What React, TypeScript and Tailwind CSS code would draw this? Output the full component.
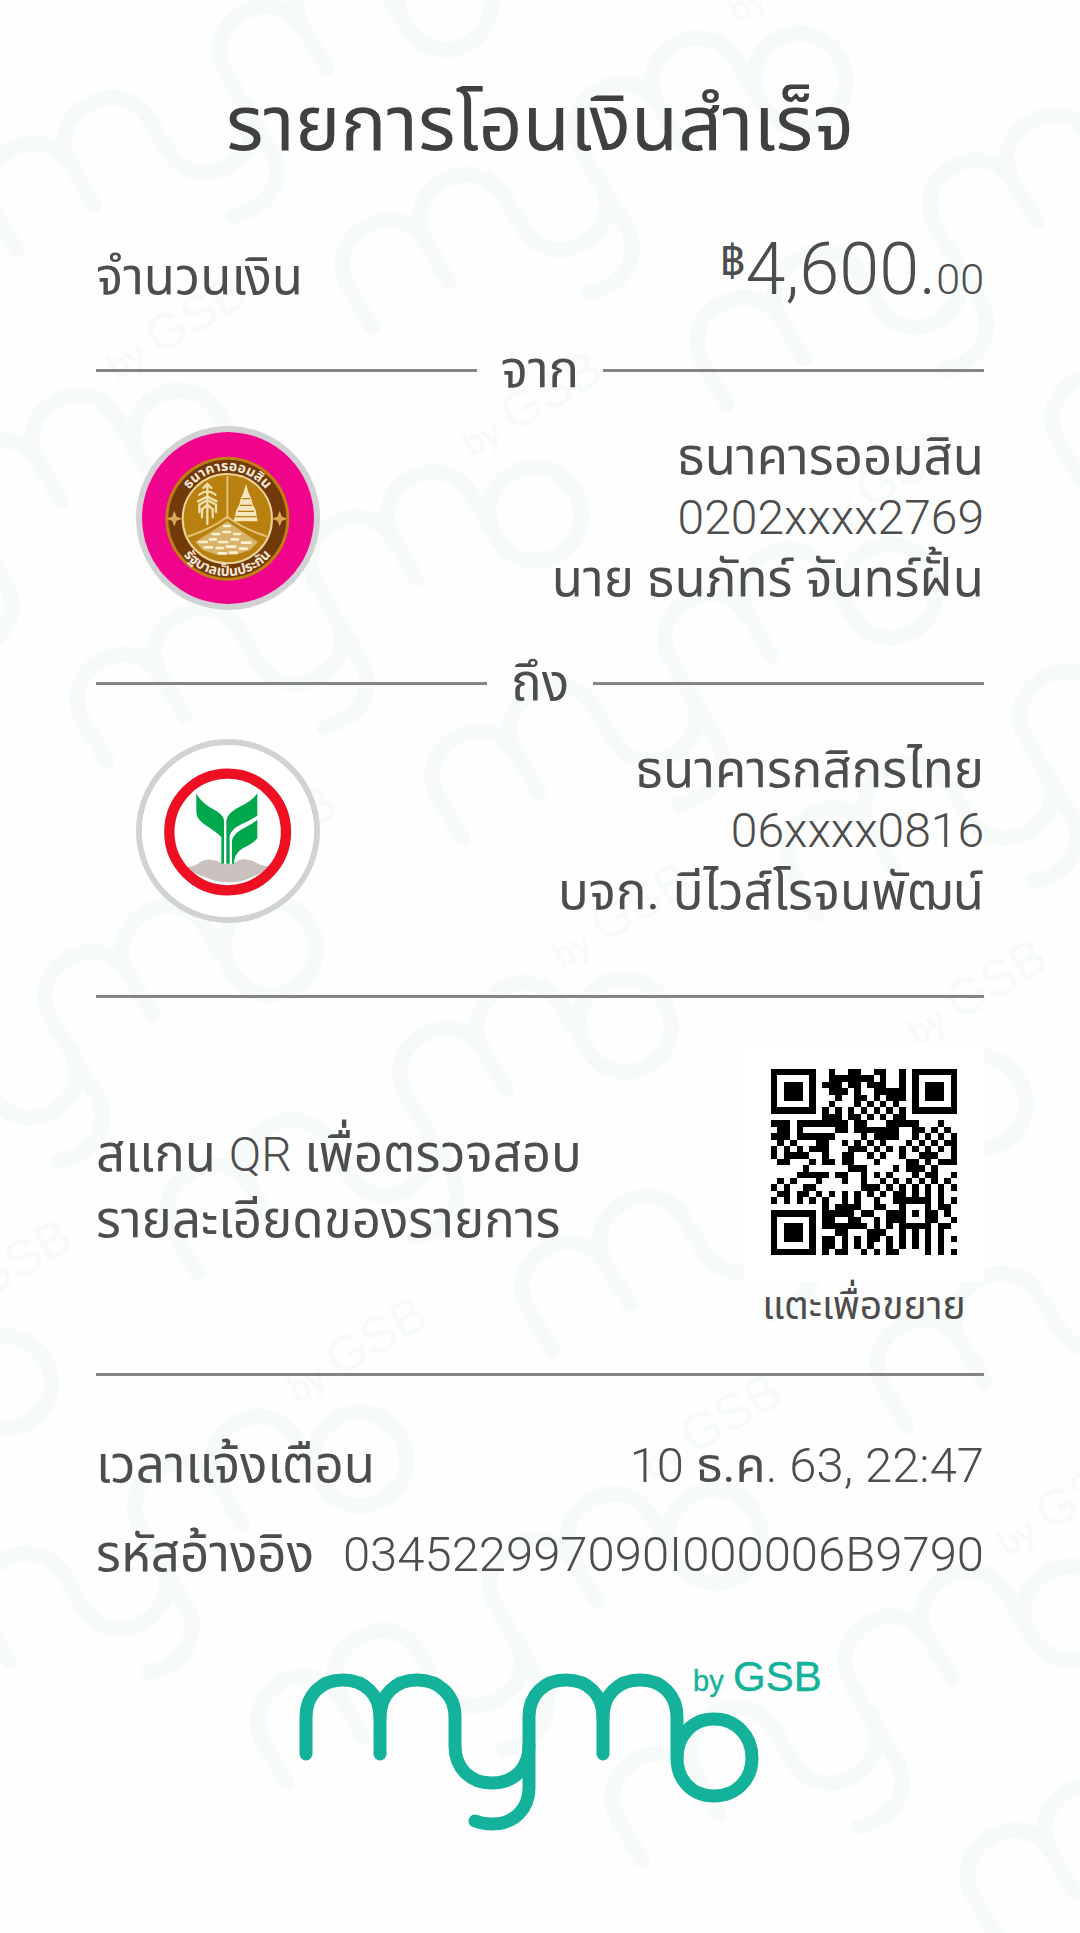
import type { ReactNode } from "react";

const QR_ROWS = [
  "#######..#..##..##..#.#######",
  "#.....#..#######.#..#.#.....#",
  "#.###.#.###.##.###..#.#.###.#",
  "#.###.#..###.#..#####.#.###.#",
  "#.###.#...#..##.#.###.#.###.#",
  "#.....#..#...#.#.#.#..#.....#",
  "#######.#.#.#.#.#.#.#.#######",
  "........###.##.#.#.##........",
  "###.########.##...#####...#..",
  ".##.#.....##.#######..##.#.#.",
  "###.######....#.####..#.#.#.#",
  ".#.#...##..#.#.#.#...#.#.#.##",
  "#.#.#.###...###.#.#.#.#.#.#.#",
  "#.####..#..##..#.#..#..###..#",
  ".##...#.##.##...#....##.#.###",
  ".....#......###....#.###.#...",
  "....#####.##..#.#.#...#.##..#",
  ".#.#...#...#..#..#.#.#.#.#.#.",
  "#.#..##.......###.#.#.#.#.#.#",
  ".##.##.#.#.#.#.#.#.##.#.#.#..",
  "#.#.#.#.#..#.#..#..######.#.#",
  "........#.####..##..#...#.##.",
  "#######.#####.##..###.#.##.#.",
  "#.....#.##..##..#.###...##..#",
  "#.###.#.#######.#.#.#####.##.",
  "#.###.#...##...###..#.#.#.#..",
  "#.###.#.##.#.#.##.#.#.#.#.#.#",
  "#.....#.##.#.#.#..#.#.#.#.#..",
  "#######.#.##..#.#.##....#.#.#",
];

const QR_PATH = QR_ROWS.map((row, y) =>
  [...row].map((c, x) => (c === "#" ? `M${x} ${y}h1v1h-1z` : "")).join("")
).join("");

// Wordmark with its origin at the foot of the first stem
function MymoMark({ tagline = true }: { tagline?: boolean }) {
  return (
    <>
      <g
        fill="none"
        stroke="currentColor"
        strokeWidth={13}
        strokeLinecap="round"
        strokeLinejoin="round"
      >
        <path d="M0 0V-37C0-59 15-74 37-74S74-59 74-37V0" />
        <path d="M74-37C74-59 89-74 111-74S149-59 149-37V-8C149 14 164 29 186 29S223 14 223-8" />
        <path d="M297 0V-37C297-59 282-74 260-74S223-59 223-37V34C223 55 208 70 186 70Q177 70 169 67" />
        <path d="M297-37C297-59 312-74 334-74S371-59 371-37V4C371 26 386 42 408 42S446 26 446 4S430-35 408-35S371-18 371 4" />
      </g>
      {tagline && (
        <g
          fill="currentColor"
          stroke="currentColor"
          strokeWidth={0.4}
          className="font-['Liberation_Sans',sans-serif]"
        >
          <text x={387} y={-63} fontSize={29}>
            by
          </text>
          <text x={427} y={-63} fontSize={42}>
            GSB
          </text>
        </g>
      )}
    </>
  );
}

const TILES = [-1, 0, 1, 2, 3].flatMap((row) =>
  [-4, -3, -2, -1, 0, 1, 2].map((col) => ({
    x: 372 + col * 355 + row * 90,
    y: 327 + col * 77 + row * 511,
  }))
).filter((t) => t.x > -500 && t.x < 1100 && t.y > -60 && t.y < 2250);

function Watermark() {
  return (
    <svg
      className="absolute inset-0 h-full w-full text-[#f6fbfa]"
      aria-hidden="true"
    >
      {TILES.map((t) => (
        <g
          key={`${t.x},${t.y}`}
          transform={`translate(${t.x} ${t.y}) rotate(-30.5) scale(1.21)`}
        >
          <MymoMark tagline={t.x > -480 && t.x < 700 && t.y > 290} />
        </g>
      ))}
    </svg>
  );
}

function GsbLogo() {
  return (
    <svg viewBox="0 0 516 516" className="h-full w-full" role="img" aria-label="GSB">
      <defs>
        <path id="gsb-top" d="M112 260a144 144 0 0 1 288 0" />
        <path id="gsb-bottom" d="M86 262a170 170 0 0 0 340 0" />
      </defs>
      <rect width="516" height="516" fill="#f0048c" />
      <circle cx="256" cy="260" r="186" fill="#c07d10" />
      <circle cx="256" cy="260" r="177" fill="#713a08" />
      <circle cx="256" cy="260" r="134" fill="#b8800f" stroke="#ecd49a" strokeWidth="6" />
      <path d="M256 132V262M130 316Q210 290 256 254Q302 290 382 316" fill="none" stroke="#e3c179" strokeWidth="6" />
      {/* tree */}
      <g fill="none" stroke="#f1dfae" strokeWidth="7" strokeLinecap="round">
        <path d="M196 160V276M184 168l12-12l12 12M172 188q24-20 48 0M168 208l28-14l28 14M172 240v-22l24-14l26 14v22M180 256v-24l16-14l16 14v24" />
      </g>
      {/* pagoda */}
      <path
        d="M312 156l7 24l8 18l6 22l8 14l6 34h-72l8-34l8-14l6-22l8-18z"
        fill="#f5e6bd"
      />
      <path d="M300 200h24M294 220h36M288 238h48M280 254h64" stroke="#b8800f" strokeWidth="4" />
      {/* coins */}
      <path d="M160 330l96-62l92 62l-24 24l-42 14h-58l-42-14z" fill="#d7b36a" />
      <path
        d="M172 330h22M204 322h18M232 330h24M268 322h20M300 332h26M188 346h22M224 348h18M254 344h26M294 350h20M212 306h20M244 300h20M276 306h18M230 364h22M264 362h20M246 282h18"
        stroke="#fbf0cf"
        strokeWidth="8"
        strokeLinecap="round"
      />
      <path d="M97 242l5 13l13 5l-13 5l-5 13l-5-13l-13-5l13-5zM413 242l5 13l13 5l-13 5l-5 13l-5-13l-13-5l13-5z" fill="#d9aa55" stroke="#d9aa55" strokeWidth="4" />
      <g fill="#f8e8d8" fontSize="42" fontWeight="700" textAnchor="middle">
        <text>
          <textPath href="#gsb-top" startOffset="50%">
            ธนาคารออมสิน
          </textPath>
        </text>
        <text>
          <textPath href="#gsb-bottom" startOffset="50%">
            รัฐบาลเป็นประกัน
          </textPath>
        </text>
      </g>
    </svg>
  );
}

function KasikornLogo() {
  return (
    <svg viewBox="0 0 516 516" className="h-full w-full" role="img" aria-label="KBank">
      <rect width="516" height="516" fill="#fff" />
      <path
        d="M134 366Q160 364 176 350Q198 338 226 348Q240 358 257 358Q274 358 290 346Q318 338 340 352Q360 364 382 364Q360 388 324 398Q300 412 256 412Q214 410 190 396Q154 388 134 366z"
        fill="#c9c1bd"
      />
      <circle cx="257" cy="261" r="175" fill="none" stroke="#ee1022" strokeWidth="31" />
      <g fill="#00a84c">
        <path d="M163 143Q172 166 202 186Q246 208 246 226V356H238V276Q222 260 190 240Q163 222 163 202z" />
        <path d="M253 356V228Q256 202 296 184Q334 166 346 144V212Q322 228 298 238Q268 252 263 272V356H253z" />
        <path d="M346 224V280Q330 298 302 310Q276 326 276 356H270V286Q276 262 308 248Q330 238 346 224z" />
      </g>
    </svg>
  );
}

function Divider({ label }: { label: string }) {
  return (
    <div className="flex h-16 items-center gap-6">
      <div className="h-[3px] flex-1 bg-[#858585]" />
      <span className="leading-16">{label}</span>
      <div className="h-[3px] flex-1 bg-[#858585]" />
    </div>
  );
}

type PartyProps = {
  logo: ReactNode;
  bank: string;
  account: string;
  name: string;
};

function Party({ logo, bank, account, name }: PartyProps) {
  return (
    <section className="flex items-start justify-between pt-6 pb-[41px] pl-10">
      <div className="size-[184px] shrink-0 overflow-hidden rounded-full border-[6px] border-[#d0d2d4]">
        {logo}
      </div>
      <div className="text-right leading-[61px]">
        <p>{bank}</p>
        <p className="text-5xl leading-[61px] font-light">{account}</p>
        <p>{name}</p>
      </div>
    </section>
  );
}

export default function App() {
  return (
    <main className="relative min-h-screen overflow-hidden bg-[#fefefe] px-24 pb-20 font-[Roboto,'Noto_Sans_Thai','Noto_Sans',sans-serif] text-[51px] text-[#4d4d4d]">
      <Watermark />
      <div className="relative">
        <h1 className="pt-[74px] text-center text-[77px] leading-[100px] text-[#404040]">
          รายการโอนเงินสำเร็จ
        </h1>

        <div className="flex items-baseline justify-between pt-12 pb-[11px]">
          <span>จำนวนเงิน</span>
          <p className="flex items-baseline text-7xl leading-[96px] font-light">
            <span className="self-start text-[44px] leading-[80px] font-normal">฿</span>
            4,600.
            <span className="text-[43px]">00</span>
          </p>
        </div>

        <Divider label="จาก" />
        <Party
          logo={<GsbLogo />}
          bank="ธนาคารออมสิน"
          account="0202xxxx2769"
          name="นาย ธนภัทร์ จันทร์ฝั้น"
        />
        <Divider label="ถึง" />
        <Party
          logo={<KasikornLogo />}
          bank="ธนาคารกสิกรไทย"
          account="06xxxx0816"
          name="บจก. บีไวส์โรจนพัฒน์"
        />

        <section className="mt-[31px] flex items-center justify-between border-y-[3px] border-[#858585] pt-11 pb-[43px]">
          <p className="leading-[65px]">
            สแกน <span className="text-5xl leading-[65px] font-light">QR</span> เพื่อตรวจสอบ
            <br />
            รายละเอียดของรายการ
          </p>
          <button type="button" className="flex w-[240px] flex-col items-center">
            <svg
              viewBox="0 0 29 29"
              className="size-[240px] bg-white p-[27px]"
              shapeRendering="crispEdges"
              aria-hidden="true"
            >
              <path d={QR_PATH} />
            </svg>
            <span className="text-[39px] leading-[48px] whitespace-nowrap">แตะเพื่อขยาย</span>
          </button>
        </section>

        <dl className="pt-[45px]">
          <div className="flex items-baseline justify-between leading-[88px]">
            <dt>เวลาแจ้งเตือน</dt>
            <dd className="text-[49px] font-light">
              10 <span className="font-normal">ธ.ค</span>. 63, 22:47
            </dd>
          </div>
          <div className="flex items-baseline justify-between leading-[88px]">
            <dt>รหัสอ้างอิง</dt>
            <dd className="text-[49px] font-light">034522997090I000006B9790</dd>
          </div>
        </dl>

        <svg
          viewBox="-50 -100 568 180"
          className="mx-auto mt-[55px] h-[180px] w-[568px] text-[#14b29a]"
          role="img"
          aria-label="mymo by GSB"
        >
          <MymoMark />
        </svg>
      </div>
    </main>
  );
}
